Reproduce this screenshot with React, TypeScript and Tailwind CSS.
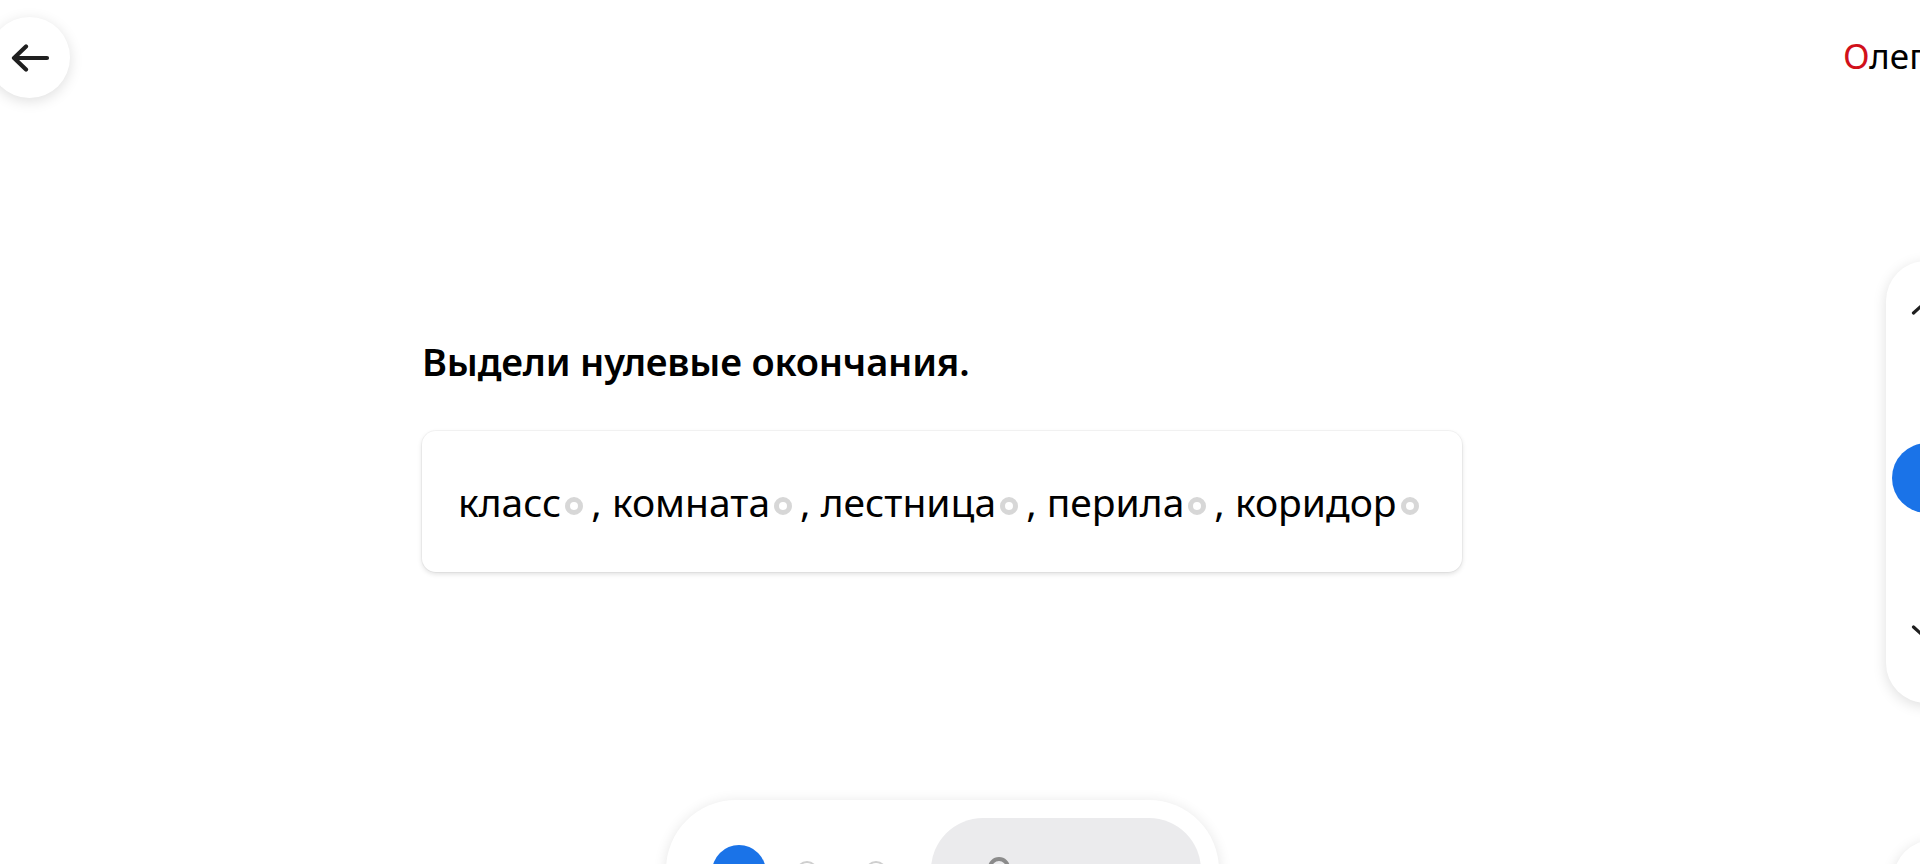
import type { ReactNode } from "react";

const words = ["класс", "комната", "лестница", "перила", "коридор"];

function Ring() {
  return (
    <span className="ml-[4px] mr-[8px] inline-block h-[18px] w-[18px] rounded-full border-[5px] border-[#d7d7d7] align-middle" />
  );
}

function RoundButton({ children, className = "" }: { children?: ReactNode; className?: string }) {
  return (
    <div
      className={`flex h-[81px] w-[81px] shrink-0 items-center justify-center rounded-full bg-white shadow-[0_3px_14px_rgba(0,0,0,0.13)] ${className}`}
    >
      {children}
    </div>
  );
}

export default function App() {
  return (
    <div
      className="flex h-[864px] w-[1920px] flex-col overflow-hidden bg-white text-black"
      style={{ fontFamily: '"Noto Sans", "Open Sans", sans-serif' }}
    >
      {/* top bar */}
      <header className="flex items-start justify-between pt-[17px]">
        <RoundButton className="-ml-[11px]">
          <svg width="40" height="28" viewBox="0 0 40 28" fill="none" aria-hidden="true">
            <path
              d="M4 14H37M16 2.5L4 14L16 25.5"
              stroke="#1f1f1f"
              strokeWidth="4.2"
              strokeLinecap="round"
              strokeLinejoin="round"
            />
          </svg>
        </RoundButton>
        <div className="mt-[19px] w-[77px] whitespace-nowrap text-[35px] leading-[40px]">
          <span className="text-[#d1101a]">О</span>лег
        </div>
      </header>

      {/* body */}
      <div className="mt-[163px] flex items-start">
        <section className="ml-[422px] flex w-[1040px] shrink-0 flex-col pt-[77px]">
          <h1 className="text-[38px] font-semibold leading-[46px] tracking-[-0.2px]">
            Выдели нулевые окончания.
          </h1>

          <div className="mt-[47px] flex h-[141px] items-center rounded-[14px] bg-white px-[36px] shadow-[0_0_0_1px_rgba(0,0,0,0.035),0_2px_5px_rgba(0,0,0,0.13)]">
            <p className="whitespace-nowrap text-[39px] leading-[48px]">
              {words.map((w, i) => (
                <span key={w}>
                  {w}
                  <Ring />
                  {i < words.length - 1 ? ", " : null}
                </span>
              ))}
            </p>
          </div>

          {/* bottom controls */}
          <div className="mx-auto mt-[228px] flex h-[140px] w-[553px] items-start rounded-[70px] bg-white pt-[18px] pl-[46px] pr-[18px] shadow-[0_2px_14px_rgba(0,0,0,0.11)]">
            <div className="mt-[27px] flex items-center">
              <span className="h-[54px] w-[54px] rounded-full bg-[#1a73e8]" />
              <span className="ml-[30px] h-[22px] w-[22px] rounded-full border-2 border-[#cfcfcf]" />
              <span className="ml-[47px] h-[22px] w-[22px] rounded-full border-2 border-[#cfcfcf]" />
            </div>
            <div className="ml-auto flex h-[104px] w-[270px] rounded-[52px] bg-[#ebebed] pl-[57px] pt-[39px]">
              <span className="h-[22px] w-[22px] rounded-full border-[4px] border-[#8b8b8b]" />
            </div>
          </div>
        </section>

        <aside className="-mr-[48px] ml-auto flex w-[82px] shrink-0 flex-col items-start">
          <div className="flex h-[442px] w-[82px] flex-col items-center rounded-[40px] bg-white pt-[37px] shadow-[0_3px_14px_rgba(0,0,0,0.13)]">
            <svg width="32" height="18" viewBox="0 0 32 18" fill="none" aria-hidden="true">
              <path d="M2.5 15L16 3L29.5 15" stroke="#1f1f1f" strokeWidth="3.2" strokeLinecap="round" strokeLinejoin="round" />
            </svg>
            <span className="mt-[127px] h-[70px] w-[70px] rounded-full bg-[#1a73e8]" />
            <svg className="mt-[111px]" width="32" height="18" viewBox="0 0 32 18" fill="none" aria-hidden="true">
              <path d="M2.5 3L16 15L29.5 3" stroke="#1f1f1f" strokeWidth="3.2" strokeLinecap="round" strokeLinejoin="round" />
            </svg>
          </div>
          <RoundButton className="ml-[7px] mt-[137px]" />
        </aside>
      </div>
    </div>
  );
}
